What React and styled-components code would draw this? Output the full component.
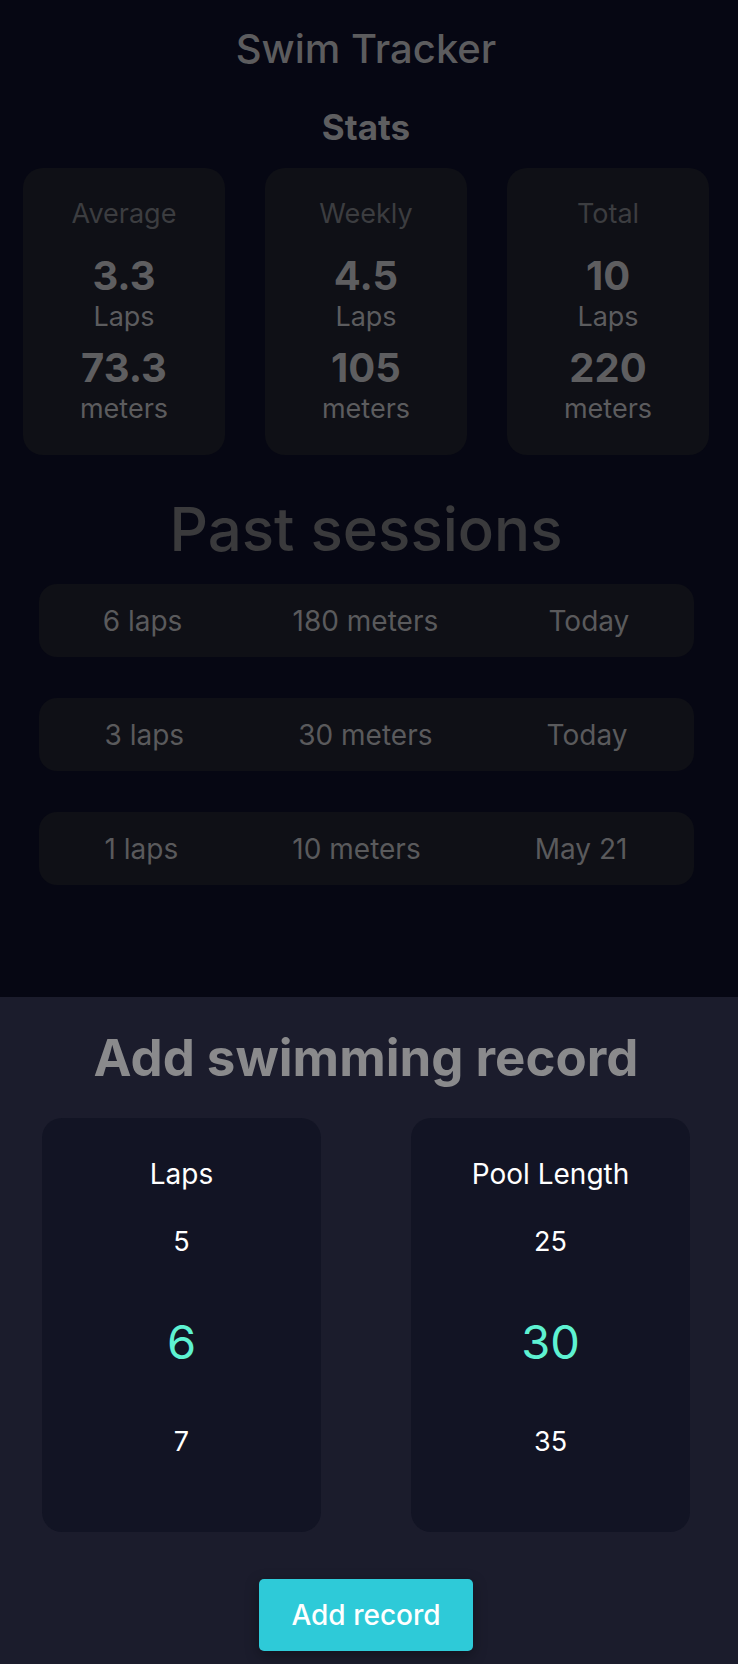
import styled, { createGlobalStyle } from "styled-components";

const GlobalStyle = createGlobalStyle`
    * {
        box-sizing: border-box;
    }
    body {
        margin: 0;
        background: #1b1c2c;
        font-family: Inter, "Noto Sans", sans-serif;
    }
`

const stats = [
    { title: "Average", laps: "3.3", meters: "73.3" },
    { title: "Weekly", laps: "4.5", meters: "105" },
    { title: "Total", laps: "10", meters: "220" },
];

const sessions = [
    { laps: 6, meters: 180, date: "Today" },
    { laps: 3, meters: 30, date: "Today" },
    { laps: 1, meters: 10, date: "May 21" },
];

const pickers = [
    { label: "Laps", values: [5, 6, 7], selected: 6 },
    { label: "Pool Length", values: [25, 30, 35], selected: 30 },
];

const App = () => {
    return (
        <>
            <GlobalStyle />
            <TopSection>
                <Content>
                    <AppTitle>Swim Tracker</AppTitle>
                    <StatsTitle>Stats</StatsTitle>
                    <StatsGrid>
                        {stats.map((s) => (
                            <StatCard key={s.title}>
                                <StatLabel>{s.title}</StatLabel>
                                <StatValue $top={24}>{s.laps}</StatValue>
                                <StatUnit>Laps</StatUnit>
                                <StatValue $top={12}>{s.meters}</StatValue>
                                <StatUnit>meters</StatUnit>
                            </StatCard>
                        ))}
                    </StatsGrid>
                    <SessionsTitle>Past sessions</SessionsTitle>
                    <SessionList>
                        {sessions.map((s, i) => (
                            <SessionRow key={i}>
                                <SessionCell>{s.laps} laps</SessionCell>
                                <SessionCell>{s.meters} meters</SessionCell>
                                <SessionCell>{s.date}</SessionCell>
                            </SessionRow>
                        ))}
                    </SessionList>
                </Content>
            </TopSection>
            <Sheet>
                <Content>
                    <SheetTitle>Add swimming record</SheetTitle>
                    <PickerRow>
                        {pickers.map((p) => (
                            <PickerCard key={p.label}>
                                <PickerLabel>{p.label}</PickerLabel>
                                {p.values.map((v) => (
                                    <PickerItem key={v} $selected={v === p.selected}>
                                        {v}
                                    </PickerItem>
                                ))}
                            </PickerCard>
                        ))}
                    </PickerRow>
                    <AddButton>Add record</AddButton>
                </Content>
            </Sheet>
        </>
    );
};

export default App;

const TopSection = styled.div`
    height: 997px;
    background: #060713;
    padding-top: 25px;
`

const Content = styled.div`
    width: 732px;
    display: flex;
    flex-direction: column;
    align-items: center;
`

const AppTitle = styled.div`
    font-size: 40px;
    line-height: 48px;
    font-weight: 500;
    color: #5c5c5e;
`

const StatsTitle = styled.div`
    margin-top: 34px;
    font-size: 35px;
    line-height: 40px;
    font-weight: 700;
    color: #5e5e60;
`

const StatsGrid = styled.div`
    margin-top: 21px;
    display: grid;
    grid-template-columns: repeat(3, 202px);
    gap: 40px;
`

const StatCard = styled.div`
    height: 287px;
    background: #0f1016;
    border-radius: 20px;
    padding-top: 30px;
    display: flex;
    flex-direction: column;
    align-items: center;
`

const StatLabel = styled.div`
    font-size: 27px;
    line-height: 32px;
    color: #3c3d40;
`

const StatValue = styled.div`
    margin-top: ${(p) => p.$top}px;
    font-size: 40px;
    line-height: 44px;
    font-weight: 700;
    color: #5e5e60;
`

const StatUnit = styled.div`
    margin-top: 2px;
    font-size: 27px;
    line-height: 34px;
    color: #5c5c5e;
`

const SessionsTitle = styled.div`
    margin-top: 40px;
    font-size: 60px;
    line-height: 68px;
    font-weight: 500;
    color: #3a3a3c;
`

const SessionList = styled.div`
    margin-top: 21px;
    display: flex;
    flex-direction: column;
    gap: 41px;
`

const SessionRow = styled.div`
    width: 655px;
    height: 73px;
    padding: 0 9px;
    background: #0f1016;
    border-radius: 18px;
    display: flex;
    align-items: center;
    justify-content: space-around;
`

const SessionCell = styled.div`
    font-size: 28px;
    line-height: 34px;
    color: #5a5a5c;
`

const Sheet = styled.div`
    min-height: 667px;
    background: #1b1c2c;
    padding-top: 31px;
`

const SheetTitle = styled.div`
    font-size: 51px;
    line-height: 60px;
    font-weight: 700;
    color: #8a8a8c;
`

const PickerRow = styled.div`
    margin-top: 30px;
    display: flex;
    gap: 90px;
`

const PickerCard = styled.div`
    width: 279px;
    height: 414px;
    background: #121424;
    border-radius: 20px;
    padding-top: 39px;
    display: flex;
    flex-direction: column;
    align-items: center;
`

const PickerLabel = styled.div`
    font-size: 28px;
    line-height: 34px;
    color: #ffffff;
`

const PickerItem = styled.div`
    height: 100px;
    display: flex;
    align-items: center;
    font-size: ${(p) => (p.$selected ? "47px" : "27px")};
    color: ${(p) => (p.$selected ? "#5ef2d2" : "#ffffff")};
`

const AddButton = styled.button`
    margin-top: 47px;
    width: 214px;
    height: 72px;
    border: none;
    border-radius: 5px;
    background: #2ecad8;
    color: #ffffff;
    font-family: Inter, "Noto Sans", sans-serif;
    font-size: 28px;
    font-weight: 500;
    box-shadow: 0 4px 14px rgba(0, 0, 0, 0.35);
    cursor: pointer;
`
